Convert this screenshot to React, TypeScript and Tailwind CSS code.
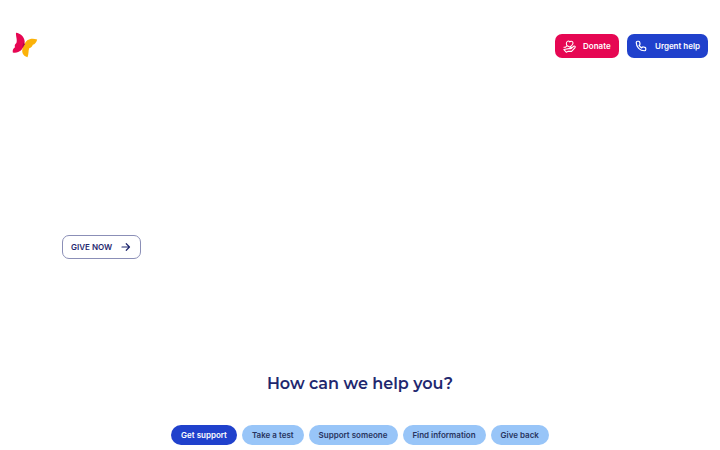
import React from 'react';

const topics = [
  { label: 'Get support', width: 'w-[66px]' },
  { label: 'Take a test', width: 'w-[61.5px]' },
  { label: 'Support someone', width: 'w-[89px]' },
  { label: 'Find information', width: 'w-[83px]' },
  { label: 'Give back', width: 'w-[58.5px]' },
];

const Logo: React.FC = () => (
  <svg width="26" height="26" viewBox="0 0 26 26" aria-label="Home">
    <path d="M4 0.8C8.5 1.3 12.3 4.6 12.7 9.6L12.2 13C10.8 18 6.5 21.6 0.8 20.4C0.4 18.2 1.2 16.2 3 15.2C2.4 13.8 2.8 12 4.4 11C5.6 8.2 3.6 4.1 4 0.8Z" fill="#e60753" />
    <path d="M12.4 12.6C13.7 7.8 18.6 5.3 25.2 7.4C24.4 10.4 22.9 12.1 20.8 12.8C20.2 14.8 19 15.8 17.2 16.2C16.2 18.8 16.9 21.8 15.5 25.2C10.6 24 8.8 19.2 11.4 14.5Z" fill="#fbb209" />
    <path d="M11.8 10L12.8 12.2L11 15.4L10.2 14.2Z" fill="#b30745" />
  </svg>
);

const HeartHandIcon: React.FC = () => (
  <svg width="13" height="13" viewBox="0 0 28 28" fill="none" stroke="currentColor" strokeWidth="2.3" strokeLinecap="round" strokeLinejoin="round">
    <path d="M8.8 12C6.5 9 6.8 4.5 9.5 3C11.5 1.8 13.5 2.5 14.5 4C16 2.2 18.8 1.9 20.5 3.8C23 6.6 20.5 11 15.5 14.5" />
    <path d="M2 15.5H5.5C8 12 11 12.5 13.5 15H16C19.2 15 19 19 16 19H12M18.5 17.5L23 13.5C25.3 12 27.5 14.5 25.5 16.8L18.5 24.5H10.5L7.5 26.5L2 20.5Z" />
  </svg>
);

const PhoneIcon: React.FC = () => (
  <svg width="12" height="12" viewBox="0 0 24 24" fill="none" stroke="currentColor" strokeWidth="2.4" strokeLinecap="round" strokeLinejoin="round">
    <path d="M5 2.5H7C8.2 2.5 9 3.2 9.3 4.2L10 7.2C10.3 8.4 9.8 9.3 9 10L8.2 10.7C9.4 13 11 14.6 13.3 15.8L14 15C14.8 14.1 15.7 13.8 16.8 14L19.8 14.7C21 15 21.5 15.9 21.5 17V19C21.5 20.7 20.5 21.5 19 21.5C9.8 21.5 2.5 14.2 2.5 5C2.5 3.5 3.5 2.5 5 2.5Z" />
  </svg>
);

const ArrowIcon: React.FC = () => (
  <svg className="ml-[9px]" width="10" height="10" viewBox="0 0 20 20" fill="none" stroke="currentColor" strokeWidth="2.4" strokeLinecap="round" strokeLinejoin="round">
    <path d="M2 10H17M10.5 3.5L17 10L10.5 16.5" />
  </svg>
);

const App: React.FC = () => {
  return (
    <div className="flex h-[450px] w-[720px] flex-col overflow-hidden bg-white font-['Inter',sans-serif] text-[#1f286f]">
      <header className="flex items-start justify-between pt-8 pr-3 pl-3">
        <Logo />
        <div className="mt-0.5 flex gap-2">
          <button className="flex h-6 w-16 items-center rounded-[7px] bg-[#e60753] pl-2 text-white">
            <HeartHandIcon />
            <span className="ml-[7px] text-[8px] font-semibold">Donate</span>
          </button>
          <button className="flex h-6 w-[81px] items-center rounded-[7px] bg-[#2041cc] pl-2 text-white">
            <PhoneIcon />
            <span className="ml-2 text-[8px] font-semibold whitespace-nowrap">Urgent help</span>
          </button>
        </div>
      </header>

      <main className="flex flex-col">
        <button className="mt-[177px] ml-[62px] flex h-6 w-[79px] items-center rounded-[7px] border border-[#8b8fb7] pl-2 text-[8px] font-semibold">
          GIVE NOW
          <ArrowIcon />
        </button>

        <h2 className="mt-[113px] text-center font-['Montserrat','Inter',sans-serif] text-[16px] leading-6 font-semibold">
          How can we help you?
        </h2>

        <nav className="mt-[29.4px] flex justify-center gap-[5px]">
          {topics.map((topic, index) => (
            <button
              key={topic.label}
              className={`h-5 rounded-full text-[8px] font-semibold whitespace-nowrap ${topic.width} ${
                index === 0 ? 'bg-[#2041cc] text-white' : 'bg-[#98c5f8] text-[#27345f]'
              }`}
            >
              {topic.label}
            </button>
          ))}
        </nav>
      </main>
    </div>
  );
};

export default App;
